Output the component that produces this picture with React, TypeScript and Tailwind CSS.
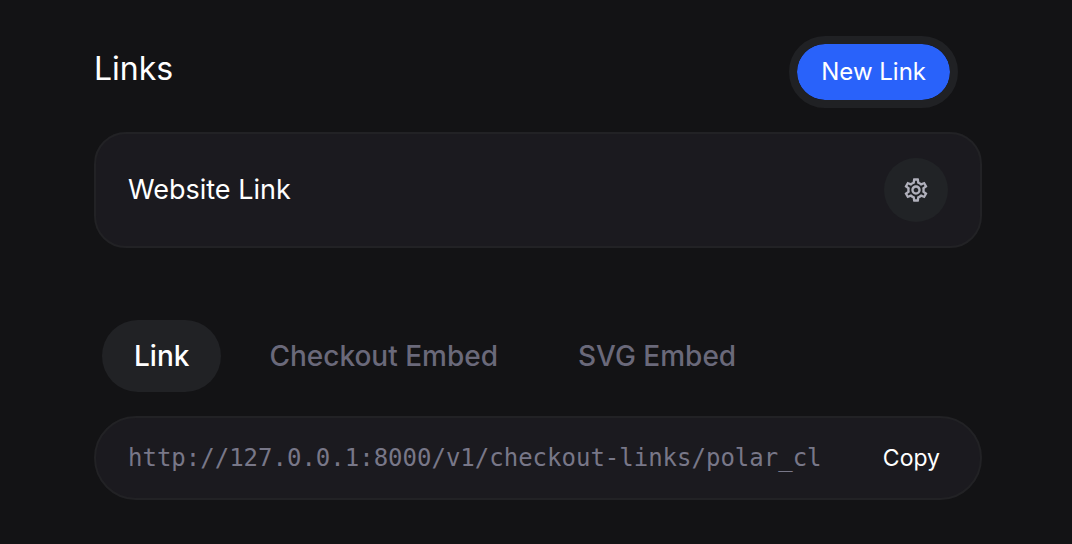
import { useState } from "react";
import { MdOutlineSettings } from "react-icons/md";

const tabs = ["Link", "Checkout Embed", "SVG Embed"];

export default function App() {
  const [active, setActive] = useState("Link");

  return (
    <main className="min-h-screen bg-[#131315] pt-9 pr-[90px] pb-11 pl-[94px] font-['Inter',sans-serif] text-white">
      <header className="flex items-start justify-between pr-6">
        <h1 className="pt-3 text-[32px] leading-[42px]">Links</h1>
        <button
          type="button"
          className="rounded-full border-8 border-[#202124] bg-[#2962fa] bg-clip-padding px-6 py-3 text-2xl"
        >
          New Link
        </button>
      </header>

      <section className="mt-6 flex items-center justify-between rounded-4xl border-2 border-[#222225] bg-[#1b1a1f] py-6 pr-8 pl-8">
        <h2 className="text-[27px] leading-9">Website Link</h2>
        <button
          type="button"
          aria-label="Link settings"
          className="flex size-16 items-center justify-center rounded-full bg-[#212326] text-[#b0b0bb]"
        >
          <MdOutlineSettings size={28} />
        </button>
      </section>

      <div role="tablist" className="mt-[72px] flex gap-4 px-2">
        {tabs.map((tab) => (
          <button
            key={tab}
            type="button"
            role="tab"
            aria-selected={active === tab}
            onClick={() => setActive(tab)}
            className={
              active === tab
                ? "rounded-full bg-[#212225] px-8 py-4 text-[28px] leading-10 font-medium text-white"
                : "rounded-full px-8 py-4 text-[28px] leading-10 font-medium text-[#6a697a]"
            }
          >
            {tab}
          </button>
        ))}
      </div>

      <div className="mt-6 flex h-[84px] items-center gap-6 rounded-full border-2 border-[#222225] bg-[#1b1a1f] pr-10 pl-8">
        <input
          type="text"
          readOnly
          aria-label="Checkout link"
          value="http://127.0.0.1:8000/v1/checkout-links/polar_cl"
          className="min-w-0 flex-1 bg-transparent font-['DejaVu_Sans_Mono',monospace] text-2xl text-[#787788] outline-none"
        />
        <button type="button" className="text-[23px]">
          Copy
        </button>
      </div>
    </main>
  );
}
